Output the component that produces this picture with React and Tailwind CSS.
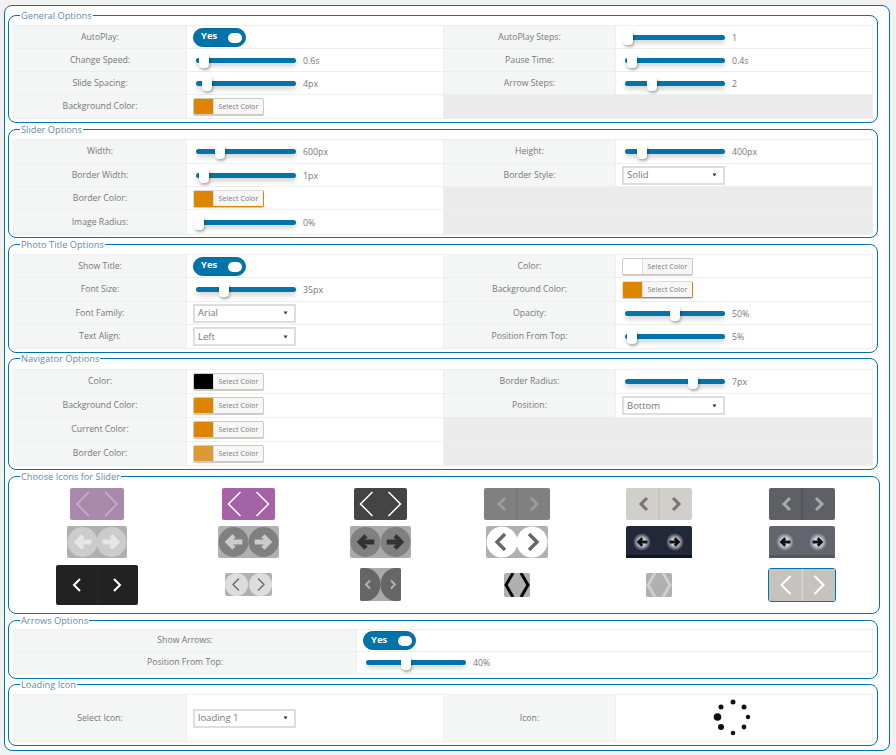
const FONT = { fontFamily: '"Open Sans", sans-serif' };

function Slider({ pos, value }) {
  return (
    <div className="flex items-center pl-[9px] w-full">
      <div className="relative w-[100px] h-[5px] rounded-full bg-[#0073aa] shadow-[0_3px_5px_rgba(0,0,0,0.2)]">
        <div
          className="absolute top-[-5px] w-[10px] h-[15px] rounded-[4px] bg-white shadow-[1px_2px_3px_rgba(0,0,0,0.3)]"
          style={{ left: pos - 5 }}
        />
      </div>
      <span className="ml-[7px] text-[8.8px] leading-[14px] mt-[1px] text-[#777]">{value}</span>
    </div>
  );
}

function Toggle() {
  return (
    <div className="ml-[6px] w-[53px] h-[19px] rounded-full bg-[#0073aa] border border-[#00699c] relative flex items-center">
      <span className="ml-[7px] text-[9.5px] font-bold text-white leading-none mb-[2px]">Yes</span>
      <span className="absolute right-[3px] top-[4px] w-[14px] h-[10px] rounded-full bg-white" />
    </div>
  );
}

function Color({ color, active }) {
  return (
    <div
      className={`ml-[6px] flex w-[71px] h-[17px] rounded-[2px] border bg-[#f7f7f7] overflow-hidden shadow-[0_1px_0_#ccc] ${
        active ? 'border-[#dddddd] border-b-[#dd8500] border-r-[#dd8500]' : 'border-[#cfcabf]'
      }`}
    >
      <span className="w-[19px] h-full shrink-0" style={{ background: color }} />
      <span className="flex-1 text-center text-[7px] tracking-[0.1px] leading-[15px] text-[#777] border-l border-[#ddd]">Select Color</span>
    </div>
  );
}

function Select({ value }) {
  return (
    <div className="ml-[6px] flex items-center justify-between w-[103px] h-[19px] border-2 border-[#ddd] bg-white pl-[3px] pr-[6px]">
      <span className="text-[9.5px] leading-none text-[#777]">{value}</span>
      <svg width="5" height="4" viewBox="0 0 5 4"><path d="M0.5 0.5h4L2.5 3.5z" fill="#333" /></svg>
    </div>
  );
}

function Label({ children }) {
  return (
    <div className="flex items-center justify-center bg-[#f4f5f5] border-r border-[#eee] text-[8.7px] leading-[14px] text-[#777] pb-[1px]">
      {children}
    </div>
  );
}

function Val({ children }) {
  return <div className="flex items-center border-r border-[#eee] bg-white">{children}</div>;
}

function Empty() {
  return <div className="col-span-2 bg-[#ebebeb]" />;
}

function Row({ h, children, cols = 'grid-cols-[173px_257px_172px_257px]' }) {
  return (
    <div className={`grid ${cols} border-b border-[#eee]`} style={{ height: h }}>
      {children}
    </div>
  );
}

function Table({ children, mt = 3 }) {
  return (
    <div className="w-[860px] border-t border-l border-[#eee]" style={{ marginTop: mt }}>
      {children}
    </div>
  );
}

function Section({ title, pb, mt = 0, children }) {
  return (
    <fieldset className="w-[869px] border border-[#0073aa] rounded-[8px] px-[4px]" style={{ paddingBottom: pb, marginTop: mt }}>
      <legend className="ml-[7px] px-[1px] text-[9.25px] leading-[13px] text-[#5f8ba8]">{title}</legend>
      {children}
    </fieldset>
  );
}

function Box({ w, h, bg, radius = 2, children }) {
  return (
    <svg width={w} height={h} viewBox={`0 0 ${w} ${h}`}>
      <rect x="0" y="0" width={w} height={h} rx={radius} fill={bg} />
      {children}
    </svg>
  );
}

function Chevron({ cx, cy, dx, dy, dir, color, sw }) {
  const tip = cx + (dir < 0 ? -dx / 2 : dx / 2);
  const tail = cx + (dir < 0 ? dx / 2 : -dx / 2);
  return <path d={`M${tail} ${cy - dy}L${tip} ${cy}L${tail} ${cy + dy}`} fill="none" stroke={color} strokeWidth={sw} />;
}

function Fat({ cx, cy, dir, color, s = 1 }) {
  const p = [
    [-8, 0],
    [-1, -7],
    [2, -4],
    [-0.5, -2.2],
    [8, -2.2],
    [8, 2.2],
    [-0.5, 2.2],
    [2, 4],
    [-1, 7],
  ]
    .map(([x, y]) => `${cx + dir * x * s},${cy + y * s}`)
    .join(' ');
  return <polygon points={p} fill={color} />;
}

function CircleArrows({ w, bg, circle, arrow, r = 15 }) {
  const cy = 16;
  const c1 = r + 0.5;
  const c2 = w - r - 0.5;
  return (
    <Box w={w} h={32} bg={bg}>
      <circle cx={c1} cy={cy} r={r} fill={circle} />
      <circle cx={c2} cy={cy} r={r} fill={circle} />
      <Fat cx={c1} cy={cy} dir={1} color={arrow} s={1.1} />
      <Fat cx={c2} cy={cy} dir={-1} color={arrow} s={1.1} />
    </Box>
  );
}

function Split({ bg, divider, arrow }) {
  return (
    <Box w={66} h={32} bg={bg}>
      <rect x="32.5" y="0" width="1" height="32" fill={divider} />
      <Chevron cx={18} cy={16} dx={6} dy={6} dir={-1} color={arrow} sw={3} />
      <Chevron cx={50} cy={16} dx={6} dy={6} dir={1} color={arrow} sw={3} />
    </Box>
  );
}

function Glow({ bg, bottom, id }) {
  return (
    <Box w={66} h={32} bg={bg}>
      <defs>
        <radialGradient id={id}>
          <stop offset="35%" stopColor="#fff" stopOpacity="0.85" />
          <stop offset="100%" stopColor="#fff" stopOpacity="0" />
        </radialGradient>
      </defs>
      <rect x="0" y="29" width="66" height="3" fill={bottom} />
      <circle cx="16" cy="16" r="9" fill={`url(#${id})`} />
      <circle cx="49" cy="16" r="9" fill={`url(#${id})`} />
      <Fat cx={16} cy={16} dir={1} color="#111" s={0.68} />
      <Fat cx={49} cy={16} dir={-1} color="#111" s={0.68} />
    </Box>
  );
}

function Icons() {
  const cell = 'flex items-center justify-center';
  return (
    <div className="w-[862px] mt-[5px] grid grid-cols-[168px_134px_130px_144px_140px_146px] grid-rows-[32px_32px_41px] gap-y-[6px]">
      <div className={cell}>
        <Box w={54} h={32} bg="#a98aac">
          <Chevron cx={13} cy={16} dx={12} dy={12} dir={-1} color="#c9b9cb" sw={1.3} />
          <Chevron cx={41} cy={16} dx={12} dy={12} dir={1} color="#c9b9cb" sw={1.3} />
        </Box>
      </div>
      <div className={cell}>
        <Box w={53} h={32} bg="#a363a4">
          <Chevron cx={12.5} cy={16} dx={12} dy={12} dir={-1} color="#fff" sw={1.5} />
          <Chevron cx={40.5} cy={16} dx={12} dy={12} dir={1} color="#fff" sw={1.5} />
        </Box>
      </div>
      <div className={cell}>
        <Box w={53} h={32} bg="#444">
          <Chevron cx={12.5} cy={16} dx={12} dy={12} dir={-1} color="#fff" sw={1.5} />
          <Chevron cx={40.5} cy={16} dx={12} dy={12} dir={1} color="#fff" sw={1.5} />
        </Box>
      </div>
      <div className={cell}><Split bg="#808080" divider="#6f6f6f" arrow="#9b9b9b" /></div>
      <div className={cell}><Split bg="#d0cfca" divider="#b8b7b2" arrow="#757575" /></div>
      <div className={cell}><Split bg="#5f6065" divider="#48494d" arrow="#a9a9a9" /></div>

      <div className={cell}><CircleArrows w={60} bg="#b0b0b0" circle="#cccccc" arrow="#e6e6e6" /></div>
      <div className={cell}><CircleArrows w={61} bg="#b0b0b0" circle="#808080" arrow="#cccccc" /></div>
      <div className={cell}><CircleArrows w={61} bg="#aaaaaa" circle="#808080" arrow="#333333" /></div>
      <div className={cell}>
        <Box w={62} h={32} bg="#b0b0b0">
          <circle cx="16" cy="16" r="15.5" fill="#fff" />
          <circle cx="46" cy="16" r="15.5" fill="#fff" />
          <Chevron cx={15} cy={16} dx={8} dy={8} dir={-1} color="#666" sw={3.4} />
          <Chevron cx={47} cy={16} dx={8} dy={8} dir={1} color="#666" sw={3.4} />
        </Box>
      </div>
      <div className={cell}><Glow bg="#232838" bottom="#12151f" id="g1" /></div>
      <div className={cell}><Glow bg="#62646e" bottom="#54565e" id="g2" /></div>

      <div className={cell}>
        <Box w={82} h={40} bg="#222222">
          <rect x="41" y="0" width="1" height="40" fill="#2c2c2c" />
          <Chevron cx={21} cy={20} dx={6} dy={6} dir={-1} color="#fff" sw={2} />
          <Chevron cx={61} cy={20} dx={6} dy={6} dir={1} color="#fff" sw={2} />
        </Box>
      </div>
      <div className={cell}>
        <Box w={47} h={23} bg="#b0b0b0">
          <circle cx="11.5" cy="11.5" r="11.5" fill="#dddddd" />
          <circle cx="35.5" cy="11.5" r="11.5" fill="#dddddd" />
          <Chevron cx={11} cy={11.5} dx={6} dy={6} dir={-1} color="#666" sw={1.3} />
          <Chevron cx={36} cy={11.5} dx={6} dy={6} dir={1} color="#666" sw={1.3} />
        </Box>
      </div>
      <div className={cell}>
        <Box w={41} h={33} bg="#aaaaaa">
          <path d="M2 0H5A15.5 16.5 0 0 1 5 33H2A2 2 0 0 1 0 31V2A2 2 0 0 1 2 0Z" fill="#666" />
          <path d="M39 0H36A15.5 16.5 0 0 0 36 33H39A2 2 0 0 0 41 31V2A2 2 0 0 0 39 0Z" fill="#666" />
          <Chevron cx={8} cy={16.5} dx={4} dy={4} dir={-1} color="#b5b5b5" sw={1.8} />
          <Chevron cx={33} cy={16.5} dx={4} dy={4} dir={1} color="#b5b5b5" sw={1.8} />
        </Box>
      </div>
      <div className={cell}>
        <Box w={26} h={24} bg="#b0b0b0">
          <path d="M9 0L2 12L9 24" fill="none" stroke="#000" strokeWidth="3" />
          <path d="M17 0L24 12L17 24" fill="none" stroke="#000" strokeWidth="3" />
        </Box>
      </div>
      <div className={cell}>
        <Box w={26} h={24} bg="#b0b0b0">
          <path d="M9 0L2 12L9 24" fill="none" stroke="#cfcfcf" strokeWidth="3" />
          <path d="M17 0L24 12L17 24" fill="none" stroke="#cfcfcf" strokeWidth="3" />
        </Box>
      </div>
      <div className={cell}>
        <div className="rounded-[3px] border border-[#0073aa] leading-[0]">
          <Box w={66} h={32} bg="#c4c3bd">
            <rect x="32.5" y="0" width="1.5" height="32" fill="#d8d7d3" />
            <Chevron cx={17} cy={16} dx={9} dy={9} dir={-1} color="#fff" sw={2} />
            <Chevron cx={50} cy={16} dx={9} dy={9} dir={1} color="#fff" sw={2} />
          </Box>
        </div>
      </div>
    </div>
  );
}

function Loader() {
  const dots = [
    [16, 3, 2.5],
    [27, 8, 2.5],
    [31, 18, 2.2],
    [27, 28, 2.4],
    [16, 34, 2.3],
    [4, 28, 3],
    [0.5, 18, 3.8],
    [4, 8, 2.5],
  ];
  return (
    <svg width="40" height="40" viewBox="-4 -1 40 40">
      {dots.map(([x, y, r], i) => (
        <circle key={i} cx={x} cy={y} r={r} fill="#111" />
      ))}
    </svg>
  );
}

export default function App() {
  return (
    <div className="min-h-[755px] bg-[#f1f1f1] pt-[5px] pl-[4px]" style={FONT}>
      <div className="w-[886px] h-[746px] bg-white border border-[#0073aa] rounded-[8px] pl-[3px] pt-[3px]">
        <Section title="General Options" pb={3}>
          <Table>
            <Row h={23}>
              <Label>AutoPlay:</Label>
              <Val><Toggle /></Val>
              <Label>AutoPlay Steps:</Label>
              <Val><Slider pos={3} value="1" /></Val>
            </Row>
            <Row h={23}>
              <Label>Change Speed:</Label>
              <Val><Slider pos={8} value="0.6s" /></Val>
              <Label>Pause Time:</Label>
              <Val><Slider pos={7} value="0.4s" /></Val>
            </Row>
            <Row h={23}>
              <Label>Slide Spacing:</Label>
              <Val><Slider pos={11} value="4px" /></Val>
              <Label>Arrow Steps:</Label>
              <Val><Slider pos={27} value="2" /></Val>
            </Row>
            <Row h={24}>
              <Label>Background Color:</Label>
              <Val><Color color="#dd8500" /></Val>
              <Empty />
            </Row>
          </Table>
        </Section>
        <Section title="Slider Options" pb={2}>
          <Table>
            <Row h={24}>
              <Label>Width:</Label>
              <Val><Slider pos={24} value="600px" /></Val>
              <Label>Height:</Label>
              <Val><Slider pos={17} value="400px" /></Val>
            </Row>
            <Row h={23}>
              <Label>Border Width:</Label>
              <Val><Slider pos={8} value="1px" /></Val>
              <Label>Border Style:</Label>
              <Val><Select value="Solid" /></Val>
            </Row>
            <Row h={23}>
              <Label>Border Color:</Label>
              <Val><Color color="#dd8500" active /></Val>
              <Empty />
            </Row>
            <Row h={25}>
              <Label>Image Radius:</Label>
              <Val><Slider pos={3} value="0%" /></Val>
              <Empty />
            </Row>
          </Table>
        </Section>
        <Section title="Photo Title Options" pb={3}>
          <Table>
            <Row h={23}>
              <Label>Show Title:</Label>
              <Val><Toggle /></Val>
              <Label>Color:</Label>
              <Val><Color color="#ffffff" /></Val>
            </Row>
            <Row h={24}>
              <Label>Font Size:</Label>
              <Val><Slider pos={28} value="35px" /></Val>
              <Label>Background Color:</Label>
              <Val><Color color="#dd8500" active /></Val>
            </Row>
            <Row h={23}>
              <Label>Font Family:</Label>
              <Val><Select value="Arial" /></Val>
              <Label>Opacity:</Label>
              <Val><Slider pos={50} value="50%" /></Val>
            </Row>
            <Row h={24}>
              <Label>Text Align:</Label>
              <Val><Select value="Left" /></Val>
              <Label>Position From Top:</Label>
              <Val><Slider pos={7} value="5%" /></Val>
            </Row>
          </Table>
        </Section>
        <Section title="Navigator Options" pb={3} mt={-1}>
          <Table mt={4}>
            <Row h={24}>
              <Label>Color:</Label>
              <Val><Color color="#000000" /></Val>
              <Label>Border Radius:</Label>
              <Val><Slider pos={68} value="7px" /></Val>
            </Row>
            <Row h={24}>
              <Label>Background Color:</Label>
              <Val><Color color="#dd8500" /></Val>
              <Label>Position:</Label>
              <Val><Select value="Bottom" /></Val>
            </Row>
            <Row h={24}>
              <Label>Current Color:</Label>
              <Val><Color color="#dd8500" /></Val>
              <Empty />
            </Row>
            <Row h={24}>
              <Label>Border Color:</Label>
              <Val><Color color="#dd9933" /></Val>
              <Empty />
            </Row>
          </Table>
        </Section>
        <Section title="Choose Icons for Slider" pb={8}>
          <Icons />
        </Section>
        <Section title="Arrows Options" pb={4}>
          <Table mt={2}>
            <Row h={22} cols="grid-cols-[343px_516px]">
              <Label>Show Arrows:</Label>
              <Val><Toggle /></Val>
            </Row>
            <Row h={22} cols="grid-cols-[343px_516px]">
              <Label>Position From Top:</Label>
              <Val><Slider pos={40} value="40%" /></Val>
            </Row>
          </Table>
        </Section>
        <Section title="Loading Icon" pb={3} mt={-1}>
          <Table>
            <Row h={47}>
              <Label>Select Icon:</Label>
              <Val><Select value="loading 1" /></Val>
              <Label>Icon:</Label>
              <Val><div className="w-full flex justify-center pr-[23px]"><Loader /></div></Val>
            </Row>
          </Table>
        </Section>
      </div>
    </div>
  );
}
